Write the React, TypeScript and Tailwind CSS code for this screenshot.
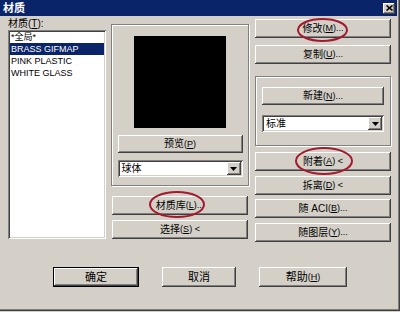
const raised =
  "bg-[#d4d0c8] shadow-[inset_-1px_-1px_#404040,inset_1px_1px_#ffffff,inset_-2px_-2px_#808080,inset_2px_2px_#d4d0c8]";
const sunken =
  "bg-white shadow-[inset_1px_1px_#808080,inset_-1px_-1px_#ffffff,inset_2px_2px_#404040,inset_-2px_-2px_#d4d0c8]";
const etched = "border border-[#808080] shadow-[inset_1px_1px_#ffffff,1px_1px_#ffffff]";

type BtnProps = { zh: string; k?: string; tail?: string; className?: string };

const Btn = ({ zh, k, tail = "", className = "" }: BtnProps) => (
  <div className={`${raised} flex items-center justify-center text-[10px] leading-none text-black ${className}`}>
    <span>{zh}</span>
    {k && (
      <span className="text-[9px]">
        (<span className="underline">{k}</span>){tail}
      </span>
    )}
  </div>
);

const Combo = ({ value, className = "" }: { value: string; className?: string }) => (
  <div className={`${sunken} flex items-center p-[2px] ${className}`}>
    <span className="flex-1 pl-[2px] text-[10px] leading-none">{value}</span>
    <div className={`${raised} w-[14px] h-full flex items-center justify-center`}>
      <svg width="7" height="4" viewBox="0 0 7 4">
        <polygon points="0,0 7,0 3.5,4" fill="#000" />
      </svg>
    </div>
  </div>
);

const items = ["*全局*", "BRASS GIFMAP", "PINK PLASTIC", "WHITE GLASS"];

export default function App() {
  return (
    <div className="relative w-[400px] h-[312px] bg-[#d4d0c8] font-['Liberation_Sans','Noto_Sans_CJK_SC',sans-serif] text-black overflow-hidden">
      <div className="h-[311px] shadow-[inset_-1px_-1px_#404040,inset_-2px_-2px_#808080]">
        {/* title bar */}
        <div className="h-[16px] mr-[3px] bg-[#0a246a] flex items-center justify-between pl-[3px] pr-[2px]">
          <span className="text-white text-[11px] font-bold leading-none">材质</span>
          <div className={`${raised} w-[12px] h-[11px] flex items-center justify-center`}>
            <svg width="7" height="6" viewBox="0 0 7 6">
              <path d="M0.5 0.5 L6.5 5.5 M6.5 0.5 L0.5 5.5" stroke="#000" strokeWidth="1.6" />
            </svg>
          </div>
        </div>

        <div className="flex pl-[8px]">
          {/* list column */}
          <div className="w-[98px] flex flex-col">
            <div className="mt-[3px] h-[11px] text-[10px] leading-none">
              材质(<span className="underline">T</span>):
            </div>
            <div className={`${sunken} h-[209px] px-[2px] pt-[0px] flex flex-col text-[9px] leading-[12px]`}>
              {items.map((it, i) => (
                <div
                  key={it}
                  className={`px-[1px] h-[12px] ${i === 0 ? "mt-[1px]" : ""} ${i === 1 ? "bg-[#0a246a] text-white" : ""}`}
                >
                  {it}
                </div>
              ))}
            </div>
          </div>

          {/* preview column */}
          <div className="ml-[5px] w-[138px] flex flex-col">
            <div className={`${etched} mt-[8px] h-[162px] flex flex-col items-center`}>
              <div className="mt-[11px] w-[92px] h-[92px] bg-black" />
              <Btn zh="预览" k="P" className="mt-[7px] w-[125px] h-[18px]" />
              <Combo value="球体" className="mt-[7px] w-[125px] h-[17px]" />
            </div>
            <Btn zh="材质库" k="L" tail="..." className="mt-[10px] ml-[1px] w-[136px] h-[19px]" />
            <Btn zh="选择" k="S" tail=" <" className="mt-[5px] ml-[1px] w-[136px] h-[19px]" />
          </div>

          {/* action column */}
          <div className="ml-[6px] w-[136px] flex flex-col">
            <Btn zh="修改" k="M" tail="..." className="mt-[3px] h-[19px]" />
            <Btn zh="复制" k="U" tail="..." className="mt-[7px] h-[19px]" />
            <div className={`${etched} mt-[12px] h-[70px] flex flex-col items-center`}>
              <Btn zh="新建" k="N" tail="..." className="mt-[10px] w-[122px] h-[18px]" />
              <Combo value="标准" className="mt-[10px] w-[122px] h-[17px]" />
            </div>
            <Btn zh="附着" k="A" tail=" <" className="mt-[6px] h-[19px]" />
            <Btn zh="拆离" k="D" tail=" <" className="mt-[5px] h-[19px]" />
            <Btn zh="随 ACI" k="B" tail="..." className="mt-[4px] h-[19px]" />
            <Btn zh="随图层" k="Y" tail="..." className="mt-[5px] h-[19px]" />
          </div>
        </div>

        {/* bottom buttons */}
        <div className="flex mt-[25px] pl-[53px]">
          <div className="border border-black">
            <Btn zh="确定" className="w-[84px] h-[18px] text-[11px]" />
          </div>
          <Btn zh="取消" className="ml-[23px] w-[74px] h-[20px] text-[11px]" />
          <Btn zh="帮助" k="H" className="ml-[23px] w-[88px] h-[20px] text-[11px]" />
        </div>
      </div>

      {/* red annotation circles */}
      <svg className="absolute inset-0 pointer-events-none" width="400" height="312">
        <g fill="none" stroke="#a3192e" strokeWidth="2">
          <ellipse cx="322.5" cy="30" rx="24.5" ry="11" />
          <ellipse cx="324" cy="161" rx="28" ry="13" />
          <ellipse cx="177" cy="204.5" rx="27" ry="12.5" />
        </g>
      </svg>
    </div>
  );
}
